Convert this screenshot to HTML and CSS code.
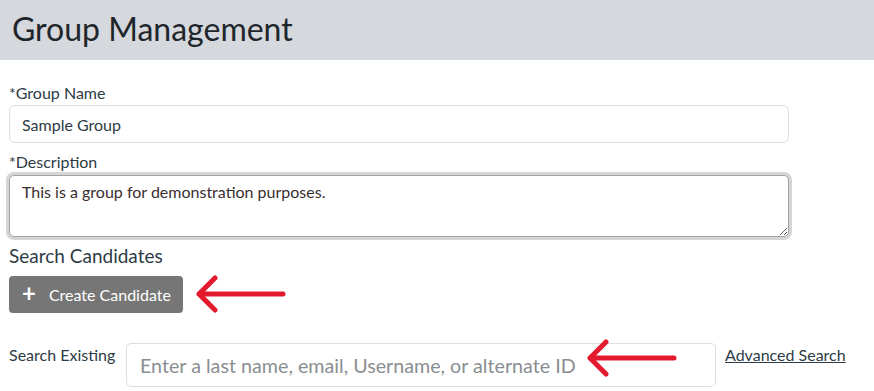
FILE: index.html
```html
<!DOCTYPE html>
<html lang="en">
<head>
  <meta charset="UTF-8" />
  <title>Group Management</title>
  <link rel="stylesheet" href="styles.css">
</head>
<body>
  <header class="page-header">
    <h1>Group Management</h1>
  </header>

  <form class="group-form">
    <label class="field-label" for="groupName">*Group Name</label>
    <input id="groupName" class="text-input" type="text" value="Sample Group">

    <label class="field-label desc-label" for="groupDesc">*Description</label>
    <textarea id="groupDesc" class="text-area">This is a group for demonstration purposes.</textarea>

    <h2 class="section-title">Search Candidates</h2>
    <div class="create-row">
      <button type="button" class="btn-create"><span class="plus">+</span>Create Candidate</button>
      <svg class="arrow" width="94" height="38" viewBox="0 0 94 38">
        <path d="M4 19 H88 M20 3 L4 19 L20 35" />
      </svg>
    </div>

    <div class="search-row">
      <label class="search-label" for="searchExisting">Search Existing</label>
      <div class="search-box">
        <input id="searchExisting" class="search-input" type="text" placeholder="Enter a last name, email, Username, or alternate ID">
        <svg class="arrow arrow-over" width="94" height="38" viewBox="0 0 94 38">
          <path d="M4 19 H88 M20 3 L4 19 L20 35" />
        </svg>
      </div>
      <a href="#" class="adv-link">Advanced Search</a>
    </div>
  </form>
</body>
</html>
```

FILE: styles.css
```css
* { margin: 0; padding: 0; box-sizing: border-box; }
body {
  background: #fff;
  font-family: 'Lato', 'Liberation Sans', sans-serif;
  color: #2d3b45;
}

.page-header {
  height: 60px;
  background: #d5d8dc;
  padding: 0 12px;
  display: flex;
  align-items: center;
}
.page-header h1 {
  font-size: 32px;
  font-weight: 400;
  color: #1f262b;
  line-height: 1;
  margin-top: -3px;
}

.group-form {
  padding: 23px 0 0 9px;
  display: flex;
  flex-direction: column;
  align-items: flex-start;
}

.field-label {
  font-size: 16px;
  line-height: 20px;
  color: #2d3b45;
}
.desc-label { margin-top: 9px; }

.text-input {
  margin-top: 2px;
  height: 38px;
  width: 780px;
  border: 1px solid #dcdee0;
  border-radius: 6px;
  padding: 0 12px;
  font-family: inherit;
  font-size: 16px;
  color: #2d3b45;
}

.text-area {
  margin-top: 3px;
  height: 62px;
  width: 780px;
  border: 1px solid #a3a3a3;
  border-radius: 5px;
  box-shadow: 0 0 0 3px #d6d6d6;
  padding: 6px 12px;
  font-family: inherit;
  font-size: 16px;
  color: #3a2e2e;
  resize: vertical;
  outline: none;
}

.section-title {
  margin-top: 7px;
  font-size: 19px;
  font-weight: 400;
  line-height: 24px;
  color: #2d3b45;
}

.create-row {
  margin-top: 7px;
  display: flex;
  align-items: center;
  gap: 12px;
}
.btn-create {
  flex-shrink: 0;
  height: 37px;
  width: 174px;
  border: none;
  border-radius: 4px;
  background: #767676;
  color: #fff;
  font-family: inherit;
  font-size: 16px;
  white-space: nowrap;
  display: flex;
  align-items: center;
  padding: 0 0 0 13px;
  cursor: pointer;
}
.btn-create .plus {
  font-size: 24px;
  font-weight: 700;
  margin-right: 13px;
  line-height: 1;
  margin-top: -3px;
}

.arrow { flex-shrink: 0; }
.arrow path {
  fill: none;
  stroke: #e31a2e;
  stroke-width: 5;
  stroke-linecap: round;
  stroke-linejoin: round;
}

.search-row {
  margin-top: 30px;
  display: flex;
  align-items: flex-start;
}
.search-label {
  flex-shrink: 0;
  font-size: 16px;
  line-height: 20px;
  margin-top: 2px;
  width: 117px;
  color: #2d3b45;
}
.search-box {
  flex-shrink: 0;
  position: relative;
  width: 590px;
}
.search-input {
  width: 100%;
  height: 44px;
  border: 1px solid #dcdee0;
  border-radius: 5px;
  padding: 0 13px;
  font-family: inherit;
  font-size: 19.7px;
  color: #2d3b45;
}
.search-input::placeholder { color: #8b8e91; }
.arrow-over {
  position: absolute;
  left: 460px;
  top: -4px;
}
.adv-link {
  flex-shrink: 0;
  white-space: nowrap;
  margin-left: 9px;
  margin-top: 2px;
  font-size: 16px;
  line-height: 20px;
  color: #2d3b45;
  text-decoration: underline;
}
```
